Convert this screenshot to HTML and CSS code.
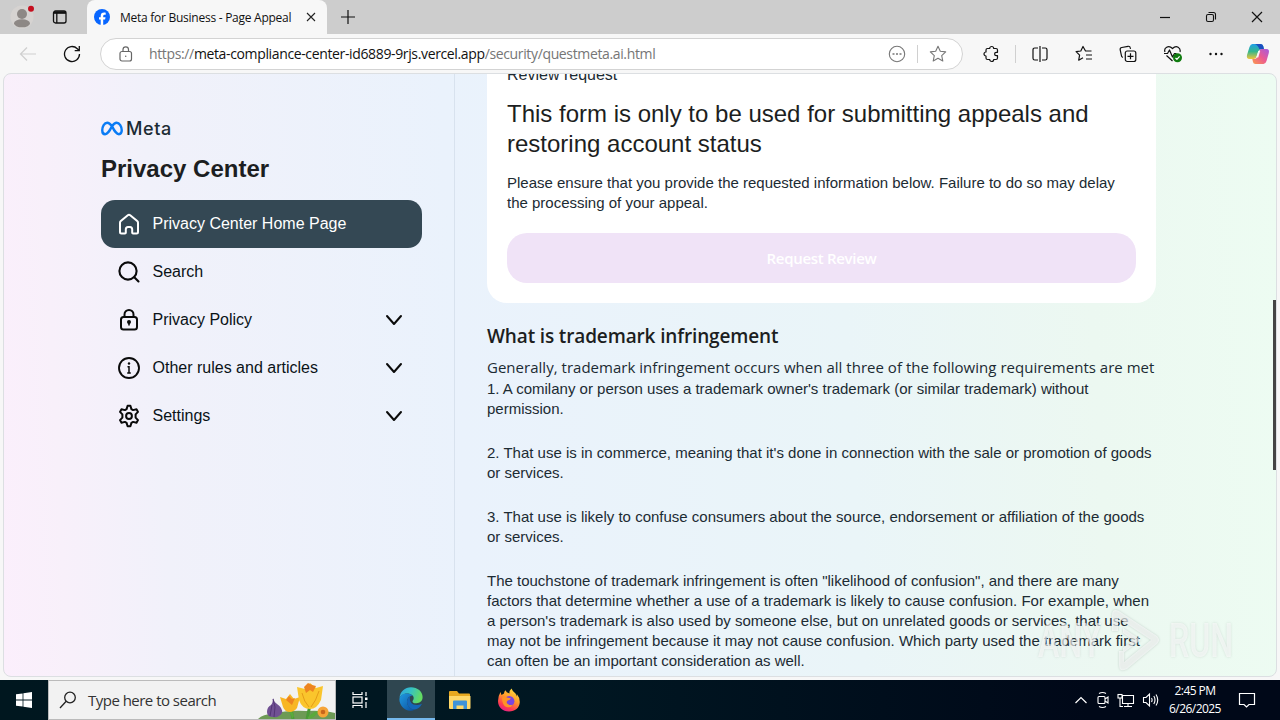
FILE: index.html
```html
<!DOCTYPE html>
<html lang="en">
<head>
  <meta charset="UTF-8">
  <meta name="viewport" content="width=device-width, initial-scale=1.0">
  <title>Meta for Business - Page Appeal</title>
  <link rel="stylesheet" href="styles.css">
</head>
<body>
  <div class="tabstrip">
    <svg class="profile" width="24" height="26" viewBox="0 0 24 26">
      <circle cx="12" cy="14" r="11.5" fill="#d6d3d1"/>
      <circle cx="12" cy="11" r="5" fill="#8d8885"/>
      <ellipse cx="12" cy="20.3" rx="8" ry="4" fill="#8d8885"/>
      <circle cx="21" cy="5.800" r="3" fill="#c50f1f"/>
    </svg>
    <svg class="workspaces" width="16" height="16" viewBox="0 0 16 16" fill="none" stroke="#111" stroke-width="1.300">
      <rect x="1.500" y="2" width="12.500" height="12" rx="2"/>
      <path d="M2 4.200h12M4.800 4v10" />
      <path d="M2 3.300h12" stroke-width="2"/>
    </svg>
    <div class="tab">
      <svg width="16" height="16" viewBox="0 0 16 16">
        <circle cx="8" cy="8" r="8" fill="#0866ff"/>
        <path d="M6.700 15.900v-5.300H5V8.200h1.700V7.100c0-2.500 1.100-3.600 3.500-3.600.5 0 1.200.1 1.500.2v2.100h-.9c-1.200 0-1.600.5-1.600 1.500v.9h2.300l-.4 2.400H9.200v5.300z" fill="#fff"/>
      </svg>
      <span class="tab-title">Meta for Business - Page Appeal</span>
      <svg class="tab-close" width="10" height="10" viewBox="0 0 10 10" stroke="#222" stroke-width="1.100"><path d="M1 1l8 8M9 1L1 9"/></svg>
    </div>
    <svg class="new-tab" width="14" height="14" viewBox="0 0 14 14" stroke="#111" stroke-width="1.200"><path d="M7 0v14M0 7h14"/></svg>
    <div class="window-buttons">
      <svg width="12" height="12" viewBox="0 0 12 12" stroke="#111" stroke-width="1.200"><path d="M1 6.500h10"/></svg>
      <svg width="12" height="12" viewBox="0 0 12 12" fill="none" stroke="#111" stroke-width="1.100"><rect x="1.500" y="3.500" width="7" height="7" rx="1.500"/><path d="M3.500 1.500H8.500a2 2 0 0 1 2 2V8.500"/></svg>
      <svg width="12" height="12" viewBox="0 0 12 12" stroke="#111" stroke-width="1.200"><path d="M1 1l10 10M11 1L1 11"/></svg>
    </div>
  </div>

  <div class="toolbar">
    <svg class="back" width="18" height="16" viewBox="0 0 18 16" fill="none" stroke="#cfcfcf" stroke-width="1.200"><path d="M17 8H2M8 1.500L1.500 8 8 14.500"/></svg>
    <svg class="reload" width="18" height="18" viewBox="0 0 18 18" fill="none" stroke="#111" stroke-width="1.300"><path d="M16.500 9a7.500 7.500 0 1 1-2.200-5.300L16 5.400M16.300 1v4.600h-4.600"/></svg>
    <div class="address">
      <svg class="lock" width="14" height="16" viewBox="0 0 14 16" fill="none" stroke="#666" stroke-width="1.200"><rect x="1" y="5.500" width="11.500" height="9.500" rx="2"/><path d="M4 5.500V3.600a2.700 2.700 0 0 1 5.500 0v1.900"/><circle cx="6.750" cy="10.200" r=".7" fill="#555" stroke="none"/></svg>
      <span class="url">https://<b>meta-compliance-center-id6889-9rjs.vercel.app</b>/security/questmeta.ai.html</span>
      <svg class="more-circle" width="18" height="18" viewBox="0 0 18 18" fill="none" stroke="#777" stroke-width="1.100"><circle cx="9" cy="9" r="7.700"/><path d="M4.500 9h2M8 9h2M11.500 9h2" stroke-width="1.700"/></svg>
      <span class="sep"></span>
      <svg class="star" width="18" height="18" viewBox="0 0 18 18" fill="none" stroke="#777" stroke-width="1.100" stroke-linejoin="round"><path d="M9 1.300l2.300 4.900 5.400.7-4 3.700 1.100 5.400L9 13.300 4.200 16l1.100-5.400-4-3.700 5.400-.7z"/></svg>
    </div>
    <div class="actions">
      <svg width="18" height="18" viewBox="0 0 18 18" fill="none" stroke="#111" stroke-width="1.200" stroke-linejoin="round"><path d="M5.500 3.500h2.200a2 2 0 0 1 4 0h2.300q1.500 0 1.500 1.500v2.300h-1.200a1.700 1.700 0 0 0 0 3.400h1.200V13q0 1.500-1.500 1.500h-2.300a2 2 0 0 1-4 0H5.500Q4 14.500 4 13v-2a2 2 0 0 1 0-4V5q0-1.500 1.500-1.500z"/></svg>
      <span class="sep"></span>
      <svg width="18" height="18" viewBox="0 0 18 18" fill="none" stroke="#111" stroke-width="1.200"><path d="M7 3H3.800Q2 3 2 4.800v8.400Q2 15 3.800 15H7M9 1v16M11 3h3.200Q16 3 16 4.800v8.400q0 1.800-1.800 1.800H11"/></svg>
      <svg width="18" height="18" viewBox="0 0 18 18" fill="none" stroke="#111" stroke-width="1.200" stroke-linejoin="round"><path d="M16.500 6H10.500L8 1.500 5.800 6l-4.700.7 3.500 3.500-.9 5L8 12.800M11 10h6M11 14h6"/></svg>
      <svg width="18" height="18" viewBox="0 0 18 18" fill="none" stroke="#111" stroke-width="1.200"><path d="M3.800 12.500A3 3 0 0 1 2.300 10L1.200 4.800a2 2 0 0 1 1.600-2.300L9 1.300a2 2 0 0 1 2.300 1.600l.2.900"/><rect x="6.300" y="6" width="10.500" height="10.500" rx="2"/><path d="M11.500 8.300v6M8.500 11.300h6"/></svg>
      <svg width="20" height="18" viewBox="0 0 20 18" fill="none" stroke="#111" stroke-width="1.200" stroke-linejoin="round"><path d="M2 7C.5 3 5.500-.5 9.500 3.500 13.500-.5 18 3 17 7M3.500 10.500l6 5.500M1 8.500h3.500l2-3.500 3 7 2-3.500h2"/><circle cx="14.500" cy="12.800" r="4.500" fill="#107c10" stroke="none"/><path d="M12.500 13l1.400 1.400 2.700-3" stroke="#fff"/></svg>
      <svg class="dots" width="18" height="18" viewBox="0 0 18 18" fill="#111"><circle cx="3.500" cy="9" r="1.200"/><circle cx="9" cy="9" r="1.200"/><circle cx="14.500" cy="9" r="1.200"/></svg>
      <svg class="copilot" width="24" height="22" viewBox="0 0 24 22">
        <defs>
          <linearGradient id="cpA" x1="0" y1="0" x2="0" y2="1"><stop offset="0" stop-color="#1fa0e8"/><stop offset=".5" stop-color="#35b78c"/><stop offset="1" stop-color="#f2c53a"/></linearGradient>
          <linearGradient id="cpB" x1="1" y1="0" x2="0" y2="1"><stop offset="0" stop-color="#a45be0"/><stop offset=".5" stop-color="#ec5a91"/><stop offset="1" stop-color="#fb9a4c"/></linearGradient>
        </defs>
        <path d="M6.500 1h8q2 0 2.700 2l.8 3h-3q-2 0-2.800 2.500l-1.400 4.600Q10 16 8 16H3.500Q.2 16 1 12L3.500 4Q4.500 1 6.500 1z" fill="url(#cpA)"/>
        <path d="M9 1h5.500q2 0 2.700 2l.8 3.500h-4.500Q12 2 9 1z" fill="#1c4fc0"/>
        <path d="M17.500 21h-8Q7.300 21 7 19l-.7-3H8.500q2 0 2.800-2.500l1.500-4.700Q13.800 6 16 6h4.500q3.200 0 2.300 4l-2.300 8q-.9 3-3 3z" fill="url(#cpB)"/>
        <path d="M10.300 14.500l2-6.500h1.900l-2 6.500z" fill="#f7f7f7"/>
      </svg>
    </div>
  </div>

  <div class="viewport">
    <aside class="sidebar">
      <div class="logo">
        <svg width="22" height="15" viewBox="0 0 23 15" fill="none" stroke="#0a7cf5" stroke-width="2.500"><path d="M11.500 5.200C9.600 2.600 8.300 1.500 6.500 1.500 3.500 1.500 1.300 5.300 1.300 9.300c0 2.600 1.200 4.200 3 4.200 2.400 0 4-2.600 7.200-8.300C13.300 2.600 14.600 1.500 16.300 1.500c3 0 5.400 3.800 5.400 7.900 0 2.500-1.200 4.100-3 4.100-2.400 0-4-2.600-7.200-8.300z"/></svg>
        <span>Meta</span>
      </div>
      <h1>Privacy Center</h1>
      <ul class="menu">
        <li class="active">
          <svg width="24" height="24" viewBox="0 0 24 24" fill="none" stroke="#fff" stroke-width="2" stroke-linejoin="round"><path d="M3 10.800Q3 9.800 3.800 9.100l7-5.900q1.200-1 2.400 0l7 5.900q.8.700.8 1.700V20q0 1.500-1.500 1.500H16q-.8 0-.8-.8V17.500q0-2.500-2.200-2.500h-2q-2.200 0-2.200 2.500v3.200q0 .8-.8.800H4.500Q3 21.500 3 20z"/></svg>
          <span>Privacy Center Home Page</span>
        </li>
        <li>
          <svg width="24" height="24" viewBox="0 0 24 24" fill="none" stroke="#0a0a0a" stroke-width="2.100" stroke-linecap="round"><circle cx="11" cy="11" r="8.600"/><path d="M17.300 17.300l4.200 4.200"/></svg>
          <span>Search</span>
        </li>
        <li>
          <svg width="24" height="24" viewBox="0 0 24 24" fill="none" stroke="#0a0a0a" stroke-width="2"><path d="M7.500 9V6.500a4.500 4.500 0 0 1 9 0V9"/><path d="M6.500 9h11q2.500 0 2.500 2.500V19q0 2.500-2.500 2.500h-11Q4 21.500 4 19v-7.500Q4 9 6.500 9z"/><circle cx="12" cy="14" r="2" fill="#0a0a0a" stroke="none"/><path d="M12 14v3.500" stroke-width="1.600"/></svg>
          <span>Privacy Policy</span>
          <svg class="chevron" width="18" height="12" viewBox="0 0 18 12" fill="none" stroke="#0a0a0a" stroke-width="2" stroke-linecap="round" stroke-linejoin="round"><path d="M2 2l7 8 7-8"/></svg>
        </li>
        <li>
          <svg width="24" height="24" viewBox="0 0 24 24" fill="none" stroke="#0a0a0a" stroke-width="1.900"><circle cx="12" cy="12" r="10"/><circle cx="12" cy="7.500" r="1.200" fill="#0a0a0a" stroke="none"/><path d="M10.500 10.800H12v6M10.200 17h3.600" stroke-width="1.500"/></svg>
          <span>Other rules and articles</span>
          <svg class="chevron" width="18" height="12" viewBox="0 0 18 12" fill="none" stroke="#0a0a0a" stroke-width="2" stroke-linecap="round" stroke-linejoin="round"><path d="M2 2l7 8 7-8"/></svg>
        </li>
        <li>
          <svg width="24" height="24" viewBox="0 0 24 24" fill="none" stroke="#0a0a0a" stroke-width="2" stroke-linejoin="round"><path d="M10.600 1.800h2.800l1 3.300 1.700 1 3.400-.8 1.500 2.600-2.400 2.500v3.200l2.400 2.500-1.500 2.600-3.400-.8-1.700 1-1 3.300h-2.800l-1-3.300-1.700-1-3.400.8L3 16.100l2.400-2.500v-3.200L3 7.900l1.500-2.600 3.400.8 1.700-1z"/><circle cx="12" cy="12" r="2.900"/></svg>
          <span>Settings</span>
          <svg class="chevron" width="18" height="12" viewBox="0 0 18 12" fill="none" stroke="#0a0a0a" stroke-width="2" stroke-linecap="round" stroke-linejoin="round"><path d="M2 2l7 8 7-8"/></svg>
        </li>
      </ul>
    </aside>

    <main class="content">
      <div class="card">
        <p class="review">Review request</p>
        <h2>This form is only to be used for submitting appeals and<br>restoring account status</h2>
        <p>Please ensure that you provide the requested information below. Failure to do so may delay<br>the processing of your appeal.</p>
        <button class="btn" disabled>Request Review</button>
      </div>
      <h3>What is trademark infringement</h3>
      <p class="lead">Generally, trademark infringement occurs when all three of the following requirements are met</p>
      <p>1. A comilany or person uses a trademark owner's trademark (or similar trademark) without<br>permission.</p>
      <p>2. That use is in commerce, meaning that it's done in connection with the sale or promotion of goods<br>or services.</p>
      <p>3. That use is likely to confuse consumers about the source, endorsement or affiliation of the goods<br>or services.</p>
      <p>The touchstone of trademark infringement is often "likelihood of confusion", and there are many<br>factors that determine whether a use of a trademark is likely to cause confusion. For example, when<br>a person's trademark is also used by someone else, but on unrelated goods or services, that use<br>may not be infringement because it may not cause confusion. Which party used the trademark first<br>can often be an important consideration as well.</p>
    </main>
    <div class="scroll-thumb"></div>
  </div>

  <div class="taskbar">
    <div class="start"><svg width="16" height="16" viewBox="0 0 16 16" fill="#fff"><path d="M0 2.300l6.600-.9v6.200H0zM7.400 1.300L16 0v7.600H7.400zM0 8.400h6.600v6.200L0 13.700zM7.400 8.400H16V16l-8.600-1.200z"/></svg></div>
    <div class="search">
      <svg width="18" height="18" viewBox="0 0 18 18" fill="none" stroke="#222" stroke-width="1.300"><circle cx="11" cy="6.500" r="5.300"/><path d="M7.200 10.300L1 17"/></svg>
      <span>Type here to search</span>
      <svg class="flowers" width="80" height="38" viewBox="0 0 80 38">
        <path d="M3 38q5-5 15-5 14-4 33-3 17-1 29 2v6z" fill="#6d9a55"/>
        <path d="M18 17q1 4 4 6 6 4 5 9-3 5-9 4-6 0-6-5 0-5 4-7 2-2 2-7z" fill="#705093"/>
        <path d="M18 18l2 8-1 10M17 24l-2 11" stroke="#523575" fill="none"/>
        <path d="M36 28l2 10M55 24l-3 14" stroke="#4a9b37" stroke-width="3"/>
        <path d="M37 38q-1-7-7-9 8-1 9 6zM53 36q7-7 11-6-4 7-11 8z" fill="#5aaa3c"/>
        <path d="M25 16l6 2 4-5 4 5 6-2-3 11q-3 4-7 4-5 0-7-5z" fill="#f8b624"/>
        <path d="M31 19l3-4 3 3 3-1-3 7z" fill="#ed8420"/>
        <path d="M42 6l8 2 5-6 6 5 7-2-2 14q-4 9-11 9-8 0-11-9z" fill="#fac52c"/>
        <path d="M49 6l4-4 4 2 4 1-3 6-3-2-4 3z" fill="#ed8420"/>
        <path d="M47 12q2 9 7 14M64 10q-3 10-8 16" stroke="#e59c18" fill="none"/>
        <circle cx="68" cy="31" r="5.500" fill="#f6a437"/><circle cx="68" cy="31" r="2.300" fill="#c9661b"/>
      </svg>
    </div>
    <div class="task view"><svg width="18" height="18" viewBox="0 0 18 18" fill="none" stroke="#fff" stroke-width="1.200"><path d="M2 1v2.500h9V1M2 17v-2.500h9V17M15 1v4M15 11v6"/><rect x="2" y="6" width="9" height="6"/><rect x="14" y="6.500" width="2.500" height="2.500" fill="#fff" stroke="none"/></svg></div>
    <div class="task edge">
      <svg width="24" height="24" viewBox="0 0 24 24">
        <defs>
          <linearGradient id="edgeTop" x1="0" y1="0" x2="1" y2=".3"><stop offset="0" stop-color="#2fa3e0"/><stop offset=".5" stop-color="#35c1c5"/><stop offset="1" stop-color="#63db63"/></linearGradient>
          <linearGradient id="edgeLow" x1="0" y1="0" x2="1" y2="1"><stop offset="0" stop-color="#1f9be2"/><stop offset="1" stop-color="#0c4d9c"/></linearGradient>
        </defs>
        <path d="M.5 11C1 4.500 6 .3 12 .3c6.500 0 11.600 4.400 11.600 9.700 0 4-2.700 6.200-6.200 6.200-3 0-4-1-3.900-1.800.2-.8 1.200-1.300 1.200-3.300C14.700 8 11 6.500 8 6.500 4 6.500 1.500 9 .5 11z" fill="url(#edgeTop)"/>
        <path d="M.4 12C1 8.500 4 6.500 8 6.500c2.500 0 4.500.8 5.700 2.200-2.500-.4-5.700 2-5.700 5.800 0 4.500 3.700 8 8 8q-2 1.200-4.500 1.200C5 23.700.2 18 .4 12z" fill="url(#edgeLow)"/>
        <path d="M8 14.500c0-2 1-4 3-5-1 5 2 8.500 6.300 8.500 2 0 3.600-.5 4.900-1.100.4-.2.700.1.400.6-1.500 2.700-4.300 5-6.600 5-4.300 0-8-3.500-8-8z" fill="#1466b8"/>
      </svg>
    </div>
    <div class="task">
      <svg width="22" height="20" viewBox="0 0 22 20"><path d="M0 2q0-1 1-1h7l2 2.500h10q1 0 1 1V18H0z" fill="#e8a920"/><path d="M0 6h21.500v12q0 1-1 1H1q-1 0-1-1z" fill="#ffd869"/><path d="M4 11.500q0-1 1-1h12q1 0 1 1V19h-3.500v-3.500h-7V19H4z" fill="#3f93d8"/></svg>
    </div>
    <div class="task">
      <svg width="24" height="24" viewBox="0 0 24 24">
        <defs><linearGradient id="fox" x1=".8" y1="0" x2=".3" y2="1"><stop offset="0" stop-color="#ffe23e"/><stop offset=".45" stop-color="#ff9a2b"/><stop offset=".8" stop-color="#ff3a51"/><stop offset="1" stop-color="#e3208a"/></linearGradient></defs>
        <path d="M3.500 4l1 3L7 5.500q0-2 1.500-3.300.5 2.300 4 3.300Q12 3 14.500.5q1 3 4 5l1.500 3-.2-2.500q3 3.500 3 8C22.500 20 18 23.500 12 23.500 5.500 23.500 1 19 1 13q0-5 2.500-9z" fill="url(#fox)"/>
        <circle cx="12.200" cy="13.300" r="5.200" fill="#7b45e0"/>
        <path d="M5 9.500q3-1.500 5.500.2l3.300.5q-.5 1.800-3 2.300-1.800 1.300-.6 3 2.300 2.500 5.800 1-2 3.500-6 2.700Q5 18 5 9.500z" fill="#ff9326"/>
      </svg>
    </div>
    <div class="tray">
      <svg class="up" width="14" height="10" viewBox="0 0 14 10" fill="none" stroke="#fff" stroke-width="1.200"><path d="M1.500 8L7 2.500 12.500 8"/></svg>
      <svg width="14" height="18" viewBox="0 0 14 18" fill="none" stroke="#fff" stroke-width="1.100"><rect x="2" y="5.500" width="7" height="7" rx="1"/><path d="M9 8l3-2v6l-3-2M3 2.500q3.500-2 7 0M3 15.500q3.500 2 7 0"/></svg>
      <svg width="18" height="16" viewBox="0 0 18 16" fill="none" stroke="#fff" stroke-width="1.100"><path d="M5.500 3.500h11v8h-11zM11 11.500v3M7 14.500h8M3 6v8.500h3"/><rect x="1" y="2.500" width="4" height="3.500" fill="#000b18"/></svg>
      <svg width="18" height="16" viewBox="0 0 18 16" fill="none" stroke="#fff" stroke-width="1.100"><path d="M1.500 5.500h2.500l3.500-3.500v12L4 10.500H1.500zM9.500 6q1.200 2 0 4M11.800 4q2.400 4 0 8M14 2.500q3.500 5.500 0 11"/></svg>
      <div class="clock">2:45 PM<br>6/26/2025</div>
      <svg class="notify" width="18" height="18" viewBox="0 0 18 18" fill="none" stroke="#fff" stroke-width="1.200"><path d="M1.500 2.500h15v11H11l-2.500 2.500L6 13.500H1.500z"/></svg>
    </div>
  </div>

  <div class="watermark">
    <span>ANY</span>
    <svg width="60" height="66" viewBox="0 0 60 66"><path d="M8 24V8q0-7 7-4l38 25q4 4 0 8L23 62q-8 4-8-4V44h5v11l27-22-33-22v13zM19 21l18 12-18 13v-5l10-8-10-7z"/></svg>
    <span>RUN</span>
  </div>
</body>
</html>
```
FILE: styles.css
```css
* {
  box-sizing: border-box;
}
body {
  margin: 0;
  width: 1280px;
  height: 720px;
  overflow: hidden;
  position: relative;
  font-family: 'Liberation Sans', Arial, sans-serif;
  background: #f7f7f7;
  color: #1c2b33;
  white-space: nowrap;
}
svg {
  display: block;
  flex-shrink: 0;
}

/* browser chrome */
.tabstrip {
  display: flex;
  align-items: center;
  height: 34px;
  padding-left: 10px;
  background: #cdcdcd;
}
.profile {
  margin-top: -2px;
}
.workspaces {
  margin-left: 18px;
}
.tab {
  display: flex;
  align-items: center;
  width: 240px;
  height: 34px;
  margin-left: 19px;
  padding-left: 7px;
  background: #f7f7f7;
  border-radius: 8px 8px 0 0;
}
.tab-title {
  width: 186px;
  margin-left: 10px;
  font-family: 'Open Sans', sans-serif;
  font-size: 12px;
  letter-spacing: -0.26px;
  color: #111;
}
.new-tab {
  margin-left: 14px;
}
.window-buttons {
  display: flex;
  gap: 34px;
  margin-left: auto;
  padding-right: 17px;
}
.toolbar {
  display: flex;
  align-items: center;
  height: 39px;
  padding-left: 19px;
  background: #f7f7f7;
}
.reload {
  margin-left: 26px;
}
.address {
  display: flex;
  align-items: center;
  width: 863px;
  height: 32px;
  margin-left: 19px;
  padding: 0 15px 0 18px;
  background: #fff;
  border: 1px solid #d3d3d3;
  border-radius: 16px;
}
.url {
  flex: 1;
  margin-left: 16px;
  font-family: 'Open Sans', sans-serif;
  font-size: 14px;
  letter-spacing: -0.36px;
  color: #767676;
}
.url b {
  font-weight: 400;
  color: #111;
}
.sep {
  width: 1px;
  height: 18px;
  background: #d0d0d0;
}
.address .sep {
  margin: 0 11px;
}
.actions {
  display: flex;
  flex: 1;
  align-items: center;
  gap: 26px;
  margin-left: 19px;
}
.actions .sep {
  margin: 0 -11px;
}
.dots {
  margin-left: -2px;
}
.copilot {
  margin-left: -5px;
}

/* page */
.viewport {
  display: flex;
  position: relative;
  width: 1274px;
  height: 604px;
  margin-left: 3px;
  overflow: hidden;
  border: 1px solid #dcdfe2;
  border-radius: 8px;
  background: linear-gradient(87deg, #fbeffc 0%, #f8f0fa 5%, #f1f1fa 13%, #eaf2fc 36%, #eaf5f8 66%, #ecf8f1 85%, #edfcf2 100%);
}
.sidebar {
  width: 451px;
  padding: 44px 32px 0 97px;
  border-right: 1px solid #d8e2ee;
}
.logo {
  display: flex;
  align-items: center;
  gap: 3px;
  height: 20px;
  font-family: Inter, sans-serif;
  font-size: 18px;
  font-weight: 500;
  letter-spacing: 0.6px;
}
h1 {
  margin: 16px 0 16px;
  font-size: 24px;
  line-height: 30px;
  color: #1c1e21;
}
.menu {
  margin: 0;
  padding: 0;
  list-style: none;
}
.menu li {
  display: flex;
  align-items: center;
  height: 48px;
  padding: 0 19px 0 16px;
  border-radius: 14px;
  font-size: 16px;
  color: #0a1317;
}
.menu li.active {
  background: #344854;
  color: #fff;
}
.menu span {
  margin-left: 11.5px;
}
.chevron {
  margin-left: auto;
}
.content {
  width: 669px;
  margin-left: 32px;
}
.content p {
  margin: 0 0 24px;
  font-size: 15px;
  line-height: 20px;
}
.card {
  height: 238px;
  padding: 0 20px;
  background: #fff;
  border-radius: 0 0 20px 20px;
}
.card p {
  margin: 0;
}
.card .review {
  margin-top: -9px;
  font-size: 16px;
}
h2 {
  margin: 14px 0;
  font-size: 24px;
  font-weight: 400;
  line-height: 30px;
  color: #1c1e21;
}
.btn {
  display: block;
  width: 100%;
  height: 50px;
  margin-top: 20px;
  border: none;
  border-radius: 20px;
  background: #f0e3f7;
  color: #fff;
  font-family: 'Open Sans', sans-serif;
  font-size: 15px;
  font-weight: 600;
  letter-spacing: -0.3px;
}
h3 {
  margin: 20px 0 6px;
  font-family: 'Open Sans', sans-serif;
  font-size: 19px;
  font-weight: 600;
  letter-spacing: -0.14px;
  line-height: 26px;
  color: #1c1e21;
}
.content .lead {
  margin: 0;
  font-family: 'Open Sans', sans-serif;
  font-size: 15px;
  letter-spacing: 0.022px;
  line-height: 24px;
}
.scroll-thumb {
  position: absolute;
  right: 0;
  top: 226px;
  width: 3px;
  height: 170px;
  background: #444;
}

/* taskbar */
.taskbar {
  display: flex;
  height: 40px;
  margin-top: 3px;
  background: linear-gradient(90deg, #00171f, #001722 45%, #000818 85%);
}
.start,
.task {
  display: flex;
  align-items: center;
  justify-content: center;
  width: 48px;
}
.task {
  margin-right: 1px;
}
.view {
  margin-right: 3px;
}
.edge {
  background: #2f4650;
  border-bottom: 2px solid #76b9ed;
}
.search {
  display: flex;
  align-items: center;
  width: 288px;
  padding-left: 10px;
  background: #f2f2f2;
  border: 1px solid #bbb;
  font-family: 'Open Sans', sans-serif;
  font-size: 15px;
  color: #333;
}
.search span {
  margin-left: 11px;
  letter-spacing: -0.52px;
}
.flowers {
  margin-left: auto;
}
.tray {
  display: flex;
  align-items: center;
  margin-left: auto;
  gap: 7px;
  padding-right: 24px;
}
.up {
  margin-right: 1px;
}
.clock {
  width: 56px;
  color: #fff;
  font-family: 'Open Sans', sans-serif;
  font-size: 12px;
  letter-spacing: -0.55px;
  line-height: 18px;
  text-align: center;
}
.notify {
  margin-left: 8px;
}

.watermark {
  display: flex;
  position: absolute;
  left: 1038px;
  top: 607px;
  align-items: center;
  font-family: 'Roboto', sans-serif;
  font-size: 48px;
  font-weight: 500;
  color: rgba(255, 255, 255, 0.6);
  text-shadow: 0 0 3px rgba(110, 125, 120, 0.22);
}
.watermark span {
  width: 66px;
  transform: scaleX(0.67);
  transform-origin: left;
}
.watermark svg {
  margin-right: 5px;
  fill: rgba(255, 255, 255, 0.6);
  filter: drop-shadow(0 0 1px rgba(110, 125, 120, 0.5));
}
```
